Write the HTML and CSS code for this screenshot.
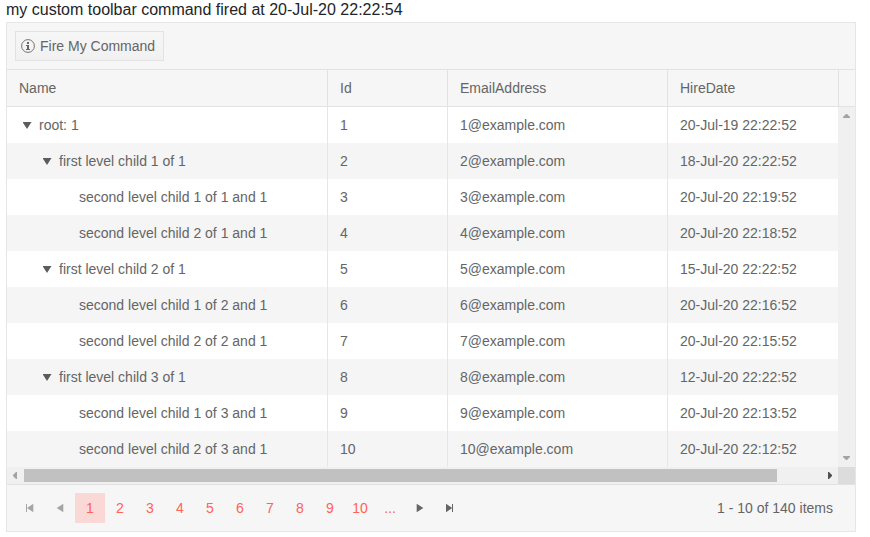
FILE: index.html
```html
<!DOCTYPE html>
<html lang="en">
<head>
<meta charset="utf-8">
<title>TreeList</title>
<link rel="stylesheet" href="styles.css">
</head>
<body>
<p class="message">my custom toolbar command fired at 20-Jul-20 22:22:54</p>
<main class="treelist">
  <div class="toolbar">
    <button class="button" type="button">
      <svg class="info" width="14" height="14" viewBox="0 0 14 14"><circle cx="7" cy="7" r="6.4" fill="none" stroke="currentColor" stroke-width="0.9"/><path fill="currentColor" d="M6 3h2v2H6zM5 6h3v4h1v1H5v-1h1V7H5z"/></svg>
      <span>Fire My Command</span>
    </button>
  </div>
  <div class="row header"><div>Name</div><div>Id</div><div>EmailAddress</div><div>HireDate</div></div>
  <div class="content">
    <div class="rows">
      <div class="row"><div class="level-0"><i class="expander"></i>root: 1</div><div>1</div><div>1@example.com</div><div>20-Jul-19 22:22:52</div></div>
      <div class="row"><div class="level-1"><i class="expander"></i>first level child 1 of 1</div><div>2</div><div>2@example.com</div><div>18-Jul-20 22:22:52</div></div>
      <div class="row"><div class="level-2">second level child 1 of 1 and 1</div><div>3</div><div>3@example.com</div><div>20-Jul-20 22:19:52</div></div>
      <div class="row"><div class="level-2">second level child 2 of 1 and 1</div><div>4</div><div>4@example.com</div><div>20-Jul-20 22:18:52</div></div>
      <div class="row"><div class="level-1"><i class="expander"></i>first level child 2 of 1</div><div>5</div><div>5@example.com</div><div>15-Jul-20 22:22:52</div></div>
      <div class="row"><div class="level-2">second level child 1 of 2 and 1</div><div>6</div><div>6@example.com</div><div>20-Jul-20 22:16:52</div></div>
      <div class="row"><div class="level-2">second level child 2 of 2 and 1</div><div>7</div><div>7@example.com</div><div>20-Jul-20 22:15:52</div></div>
      <div class="row"><div class="level-1"><i class="expander"></i>first level child 3 of 1</div><div>8</div><div>8@example.com</div><div>12-Jul-20 22:22:52</div></div>
      <div class="row"><div class="level-2">second level child 1 of 3 and 1</div><div>9</div><div>9@example.com</div><div>20-Jul-20 22:13:52</div></div>
      <div class="row"><div class="level-2">second level child 2 of 3 and 1</div><div>10</div><div>10@example.com</div><div>20-Jul-20 22:12:52</div></div>
    </div>
    <div class="scroll-y">
      <svg width="17" height="17" viewBox="0 0 17 17"><path fill="#a3a3a3" d="M5 11V10L8 7h1l3 3v1z"/></svg>
      <svg width="17" height="17" viewBox="0 0 17 17"><path fill="#a3a3a3" d="M5 6v1l3 3h1l3-3V6z"/></svg>
    </div>
    <div class="scroll-x">
      <svg width="17" height="17" viewBox="0 0 17 17"><path fill="#a3a3a3" d="M10 5H9L6 8v1l3 3h1z"/></svg>
      <div class="track"><div class="thumb"></div></div>
      <svg width="17" height="17" viewBox="0 0 17 17"><path fill="#505050" d="M7 5h1l3 3v1l-3 3H7z"/></svg>
    </div>
    <div class="corner"></div>
  </div>
  <nav class="pager">
    <a class="arrow disabled"><svg width="16" height="16" viewBox="0 0 16 16"><path fill="currentColor" d="M4 4h1v8H4zM11.3 3.8v8.4L5 8z"/></svg></a>
    <a class="arrow disabled"><svg width="16" height="16" viewBox="0 0 16 16"><path fill="currentColor" d="M11.3 3.7v8.6L4.7 8z"/></svg></a>
    <a class="current">1</a><a>2</a><a>3</a><a>4</a><a>5</a><a>6</a><a>7</a><a>8</a><a>9</a><a>10</a><a>...</a>
    <a class="arrow"><svg width="16" height="16" viewBox="0 0 16 16"><path fill="currentColor" d="M4.7 3.7v8.6L11.3 8z"/></svg></a>
    <a class="arrow"><svg width="16" height="16" viewBox="0 0 16 16"><path fill="currentColor" d="M10 4h1v8h-1zM4 3.8v8.4L10.3 8z"/></svg></a>
    <span class="info-text">1 - 10 of 140 items</span>
  </nav>
</main>
</body>
</html>
```
FILE: styles.css
```css
* { box-sizing: border-box; }
body {
  margin: 0;
  padding-left: 6px;
  background: #fff;
  font-family: "Liberation Sans", Arial, sans-serif;
}
svg { display: block; flex: none; }
.message {
  margin: 0;
  height: 22px;
  font-size: 16px;
  line-height: 20px;
  color: #212529;
}
.treelist {
  width: 850px;
  height: 510px;
  border: 1px solid #e6e6e6;
  background: #f6f6f6;
  color: #656565;
  font-size: 14px;
  line-height: 20px;
}
.toolbar {
  height: 47px;
  padding: 8px;
  border-bottom: 1px solid #e2e2e2;
}
.button {
  display: flex;
  align-items: center;
  gap: 5px;
  width: 149px;
  height: 30px;
  padding: 0 5px;
  border: 1px solid #e2e2e2;
  background: linear-gradient(#f6f6f6, #f1f1f1);
  color: inherit;
  font: inherit;
  white-space: nowrap;
}
.row {
  display: grid;
  grid-template-columns: 321px 120px 220px 1fr;
  height: 36px;
  background: #fff;
}
.row:nth-child(even) { background: #f5f5f5; }
.row > div {
  display: flex;
  align-items: center;
  padding-left: 12px;
  border-right: 1px solid #e6e6e6;
  white-space: nowrap;
}
.rows .row > div:last-child { border-right: 0; }
.row.header {
  grid-template-columns: 321px 120px 220px 171px;
  height: 37px;
  border-bottom: 1px solid #e2e2e2;
  background: #f6f6f6;
}
.row.header > div { border-color: #e2e2e2; }
.row > .level-1 { padding-left: 32px; }
.row > .level-2 { padding-left: 72px; }
.expander {
  width: 9px;
  height: 7px;
  margin: 1px 7.5px 0 3.5px;
  background: #5c5c5c;
  clip-path: polygon(0 0, 100% 0, 50% 100%);
}
.content {
  display: grid;
  grid-template-columns: 831px 17px;
  grid-template-rows: 360px 17px;
}
.scroll-y {
  display: flex;
  flex-direction: column;
  justify-content: space-between;
  background: #f0f0f0;
}
.scroll-x {
  display: flex;
  background: #f0f0f0;
}
.track {
  flex: 1;
  padding: 2px 0;
}
.thumb {
  width: 753px;
  height: 13px;
  background: #c1c1c1;
}
.corner { background: #dcdcdc; }
.pager {
  display: flex;
  align-items: center;
  height: 47px;
  padding: 0 22px 0 8px;
  border-top: 1px solid #e2e2e2;
}
.pager a {
  display: flex;
  align-items: center;
  justify-content: center;
  width: 30px;
  height: 30px;
  color: #ff6358;
}
.pager .current { background: #f9d8d6; }
.pager .arrow { color: #656565; }
.pager .disabled { color: #a5a5a5; }
.info-text { margin-left: auto; }
```
